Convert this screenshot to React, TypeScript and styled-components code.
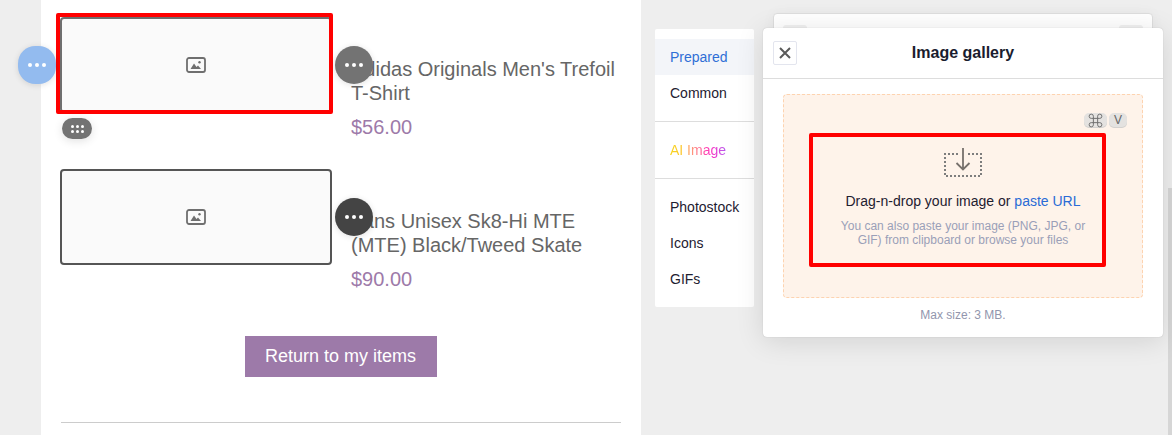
import React from "react";
import styled, { createGlobalStyle } from "styled-components";

const GlobalStyle = createGlobalStyle`
  html, body {
    margin: 0;
    padding: 0;
    height: 100%;
    overflow: hidden;
    background: #eeeeee;
    font-family: "Liberation Sans", Arial, sans-serif;
  }
`;

const Page = styled.div`
  width: 1172px;
  height: 435px;
  display: flex;
  align-items: flex-start;
  overflow: hidden;
  position: relative;
`;

const EmailColumn = styled.div`
  width: 600px;
  height: 435px;
  margin-left: 41px;
  background: #fff;
  padding: 17px 20px 0 19px;
  box-sizing: border-box;
  flex-shrink: 0;
`;

const Product = styled.div`
  display: flex;
  height: 152px;
  gap: 19px;
`;

const ImageSlot = styled.div`
  position: relative;
  width: 272px;
  height: 96px;
  flex-shrink: 0;
`;

const Placeholder = styled.div<{ $border: string }>`
  width: 100%;
  height: 100%;
  box-sizing: border-box;
  border: 2px solid ${p => p.$border};
  border-radius: 4px;
  background: #fafafa;
  display: flex;
  align-items: center;
  justify-content: center;
  color: #6f6f6f;
`;

const RedFrame = styled.div<{ $inset: string }>`
  position: absolute;
  inset: ${p => p.$inset};
  border: 4px solid #ff0000;
  border-radius: 2px;
  pointer-events: none;
  z-index: 3;
`;

const RoundHandle = styled.div<{ $bg: string }>`
  position: absolute;
  top: 29px;
  width: 38px;
  height: 38px;
  border-radius: 50%;
  background: ${p => p.$bg};
  box-shadow: 0 1px 6px rgba(0, 0, 0, 0.12);
  display: flex;
  align-items: center;
  justify-content: center;
  gap: 3px;
  z-index: 4;
`;

const LeftHandle = styled(RoundHandle)`
  left: -42px;
  border-radius: 46%;
`;

const RightHandle = styled(RoundHandle)`
  right: -41px;
`;

const Dot = styled.span`
  width: 4px;
  height: 4px;
  border-radius: 50%;
  background: #fff;
`;

const DragHandle = styled.div`
  position: absolute;
  left: 2px;
  top: 101px;
  width: 30px;
  height: 21px;
  border-radius: 11px;
  background: #737373;
  box-shadow: 0 2px 10px rgba(0, 0, 0, 0.12);
  display: grid;
  grid-template-columns: repeat(3, 3px);
  grid-auto-rows: 3px;
  gap: 2px;
  justify-content: center;
  align-content: center;
  z-index: 4;
`;

const SmallDot = styled.span`
  border-radius: 50%;
  background: #fff;
`;

const ProductInfo = styled.div`
  padding-top: 40px;
  color: #666666;
`;

const ProductTitle = styled.div`
  font-size: 20px;
  line-height: 24px;
  width: 270px;
`;

const Price = styled.div`
  font-size: 20px;
  line-height: 24px;
  margin-top: 10px;
  color: #9d7aa9;
`;

const ButtonRow = styled.div`
  display: flex;
  justify-content: center;
  margin-top: 15px;
`;

const ReturnButton = styled.div`
  width: 192px;
  height: 41px;
  background: #9d7aa9;
  color: #fff;
  font-size: 18px;
  display: flex;
  align-items: center;
  justify-content: center;
`;

const Rule = styled.div`
  height: 1px;
  background: #cccccc;
  margin: 45px 0 0 1px;
`;

const Sidebar = styled.div`
  width: 99px;
  height: 278px;
  margin: 29px 0 0 14px;
  padding-top: 10px;
  box-sizing: border-box;
  background: #fff;
  border-radius: 2px;
  flex-shrink: 0;
`;

const SideGroup = styled.div<{ $last?: boolean }>`
  padding-bottom: ${p => (p.$last ? "0" : "10px")};
  margin-bottom: ${p => (p.$last ? "0" : "10px")};
  border-bottom: ${p => (p.$last ? "none" : "1px solid #dddddd")};
`;

const SideItem = styled.div<{ $active?: boolean }>`
  height: 36px;
  line-height: 36px;
  padding-left: 15px;
  font-size: 14px;
  color: ${p => (p.$active ? "#2f6fd6" : "#1e2030")};
  background: ${p => (p.$active ? "#f3f5f9" : "transparent")};
`;

const AiLabel = styled.span`
  background: linear-gradient(90deg, #f7d51d 0%, #fcc52a 22%, #ff9a76 38%, #ff2fc0 72%, #b45cf0 100%);
  -webkit-background-clip: text;
  background-clip: text;
  color: transparent;
`;

const BackPanel = styled.div`
  position: absolute;
  left: 773px;
  top: 13px;
  width: 380px;
  height: 60px;
  box-sizing: border-box;
  background: #fff;
  border: 1px solid #dddddd;
  border-radius: 4px;
  box-shadow: 0 0 14px rgba(0, 0, 0, 0.04);
  display: flex;
  justify-content: space-between;
  padding: 11px 9px 0;
`;

const BackStub = styled.div`
  width: 24px;
  height: 24px;
  background: #f1f1f1;
  border-radius: 3px;
`;

const Modal = styled.div`
  position: absolute;
  left: 763px;
  top: 28px;
  width: 400px;
  height: 309px;
  box-sizing: border-box;
  background: #fff;
  border-radius: 4px;
  box-shadow: 0 0 1px rgba(0, 0, 0, 0.25), 0 4px 28px rgba(0, 0, 0, 0.12);
  z-index: 2;
`;

const ModalHeader = styled.div`
  position: relative;
  height: 51px;
  box-sizing: border-box;
  border-bottom: 1px solid #dddddd;
  display: flex;
  align-items: center;
  justify-content: center;
`;

const CloseButton = styled.div`
  position: absolute;
  left: 10px;
  top: 13px;
  width: 24px;
  height: 24px;
  box-sizing: border-box;
  border: 1px solid #e3e5ee;
  border-radius: 2px;
  display: flex;
  align-items: center;
  justify-content: center;
`;

const ModalTitle = styled.div`
  font-size: 16px;
  font-weight: bold;
  color: #1a1c2e;
  margin-top: -1px;
`;

const ModalBody = styled.div`
  padding: 15px 20px 0;
`;

const DropZone = styled.div`
  position: relative;
  height: 204px;
  box-sizing: border-box;
  background: #fef3ea;
  border: 1px dashed #fdd3b0;
  border-radius: 4px;
  padding-top: 38px;
`;

const KeyRow = styled.div`
  position: absolute;
  right: 15px;
  top: 18px;
  display: flex;
  gap: 2px;
`;

const Key = styled.div<{ $w: number }>`
  width: ${p => p.$w}px;
  height: 14px;
  border-radius: 5px;
  background: #e4e2e0;
  box-shadow: 0 1px 0 #d3d1cf;
  color: #666666;
  font-size: 12px;
  display: flex;
  align-items: center;
  justify-content: center;
`;

/* the frame sits off-centre, its content stays centred on the zone */
const DropTarget = styled.div`
  position: relative;
  width: 297px;
  height: 134px;
  margin-left: 25px;
  box-sizing: border-box;
  border: 4px solid #ff0000;
  border-radius: 2px;
  padding: 11px 0 0 11px;
  text-align: center;
`;

const DropIcon = styled.div`
  height: 30px;
  display: flex;
  justify-content: center;
`;

const DropText = styled.div`
  font-size: 14px;
  line-height: 18px;
  color: #1e2030;
  margin-top: 14px;
  white-space: nowrap;
`;

const UrlLink = styled.span`
  color: #2a6bd6;
`;

const DropHint = styled.div`
  font-size: 12px;
  line-height: 14px;
  color: #9a9fb8;
  width: 262px;
  margin: 9px auto 0;
`;

const MaxSize = styled.div`
  font-size: 12px;
  line-height: 14px;
  color: #9296ad;
  text-align: center;
  margin-top: 10px;
`;

const ScrollThumb = styled.div`
  position: absolute;
  right: 0;
  top: 188px;
  width: 4px;
  height: 247px;
  background: #d6d6d6;
`;

const PictureIcon = () => (
  <svg width="20" height="16" viewBox="0 0 20 16" fill="none">
    <rect x="1" y="1" width="18" height="14" rx="2" stroke="currentColor" strokeWidth="1.8" />
    <path d="M4.5 12 L8 6.5 L10.5 10 L12 8.5 L15 12 Z" fill="currentColor" />
    <circle cx="13.5" cy="5.2" r="1.2" fill="currentColor" />
  </svg>
);

const CloseIcon = () => (
  <svg width="12" height="12" viewBox="0 0 12 12" fill="none">
    <path d="M1 1 L11 11 M11 1 L1 11" stroke="#5a5a5a" strokeWidth="2" />
  </svg>
);

const DownloadIcon = () => (
  <svg width="38" height="30" viewBox="0 0 38 30" fill="none">
    <path
      d="M14 6 H1 V28 H37 V6 H24"
      stroke="#7d7d7d"
      strokeWidth="2"
      strokeDasharray="2 2"
      shapeRendering="crispEdges"
    />
    <path d="M19 0 V21 M12.5 15 L19 21.5 L25.5 15" stroke="#77716c" strokeWidth="1.8" />
  </svg>
);

const CommandIcon = () => (
  <svg width="17" height="17" viewBox="0 0 24 24" fill="none" stroke="#707070" strokeWidth="1.4">
    <path d="M15 6v12a3 3 0 1 0 3-3H6a3 3 0 1 0 3 3V6a3 3 0 1 0-3 3h12a3 3 0 1 0-3-3" />
  </svg>
);

const Dots = () => (
  <>
    <Dot />
    <Dot />
    <Dot />
  </>
);

const App = () => {
  return (
    <Page>
      <GlobalStyle />
      <EmailColumn>
        <Product>
          <ImageSlot>
            <Placeholder $border="#6f6f6f">
              <PictureIcon />
            </Placeholder>
            <RedFrame $inset="-4px -1px -1px -4px" />
            <LeftHandle $bg="#93bbef">
              <Dots />
            </LeftHandle>
            <RightHandle $bg="#737373">
              <Dots />
            </RightHandle>
            <DragHandle>
              {Array.from({ length: 6 }).map((_, i) => (
                <SmallDot key={i} />
              ))}
            </DragHandle>
          </ImageSlot>
          <ProductInfo>
            <ProductTitle>Adidas Originals Men's Trefoil T-Shirt</ProductTitle>
            <Price>$56.00</Price>
          </ProductInfo>
        </Product>
        <Product>
          <ImageSlot>
            <Placeholder $border="#555555">
              <PictureIcon />
            </Placeholder>
            <RightHandle $bg="#444444">
              <Dots />
            </RightHandle>
          </ImageSlot>
          <ProductInfo>
            <ProductTitle>Vans Unisex Sk8-Hi MTE (MTE) Black/Tweed Skate</ProductTitle>
            <Price>$90.00</Price>
          </ProductInfo>
        </Product>
        <ButtonRow>
          <ReturnButton>Return to my items</ReturnButton>
        </ButtonRow>
        <Rule />
      </EmailColumn>
      <Sidebar>
        <SideGroup>
          <SideItem $active>Prepared</SideItem>
          <SideItem>Common</SideItem>
        </SideGroup>
        <SideGroup>
          <SideItem>
            <AiLabel>AI Image</AiLabel>
          </SideItem>
        </SideGroup>
        <SideGroup $last>
          <SideItem>Photostock</SideItem>
          <SideItem>Icons</SideItem>
          <SideItem>GIFs</SideItem>
        </SideGroup>
      </Sidebar>
      <BackPanel>
        <BackStub />
        <BackStub />
      </BackPanel>
      <Modal>
        <ModalHeader>
          <CloseButton>
            <CloseIcon />
          </CloseButton>
          <ModalTitle>Image gallery</ModalTitle>
        </ModalHeader>
        <ModalBody>
          <DropZone>
            <KeyRow>
              <Key $w={23}>
                <CommandIcon />
              </Key>
              <Key $w={18}>V</Key>
            </KeyRow>
            <DropTarget>
              <DropIcon>
                <DownloadIcon />
              </DropIcon>
              <DropText>
                Drag-n-drop your image or <UrlLink>paste URL</UrlLink>
              </DropText>
              <DropHint>
                You can also paste your image (PNG, JPG, or GIF) from clipboard or browse your files
              </DropHint>
            </DropTarget>
          </DropZone>
          <MaxSize>Max size: 3 MB.</MaxSize>
        </ModalBody>
      </Modal>
      <ScrollThumb />
    </Page>
  );
};

export default App;
